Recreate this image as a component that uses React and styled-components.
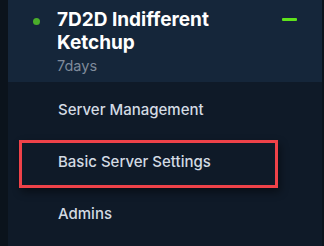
import styled, { createGlobalStyle } from "styled-components";

const GlobalStyle = createGlobalStyle`
    html, body{
        margin: 0;
        padding: 0;
        background-color: #0b131c;
        font-family: Inter, "Liberation Sans", sans-serif;
    }
`

const Layout = styled.div`
    display: flex;
    width: 324px;
    height: 246px;
    overflow: hidden;
    background-color: #0b131c;
`

const Sidebar = styled.aside`
    margin-left: 8px;
    width: 314px;
    display: flex;
    flex-direction: column;
    background-color: #0f1a28;
`

const ServerHeader = styled.div`
    height: 82px;
    box-sizing: border-box;
    padding: 8px 25px 0 25px;
    display: flex;
    align-items: flex-start;
    background-color: #15263a;
`

const StatusDot = styled.span`
    width: 7px;
    height: 7px;
    margin-top: 10px;
    border-radius: 50%;
    background-color: #4aad2a;
    flex-shrink: 0;
`

const ServerInfo = styled.div`
    margin-left: 17px;
    flex: 1;
    h2{
        margin: 0;
        max-width: 200px;
        font-size: 19px;
        line-height: 23px;
        font-weight: 700;
        color: #ffffff;
    }
    span{
        display: block;
        margin-top: 3px;
        font-size: 14.5px;
        line-height: 18px;
        color: #7f8b9b;
    }
`

const Collapse = styled.span`
    width: 15px;
    height: 3px;
    margin-top: 10px;
    border-radius: 1px;
    background-color: #5fe31b;
    flex-shrink: 0;
`

const Nav = styled.nav`
    display: flex;
    flex-direction: column;
    gap: 4px;
    padding-top: 6px;
`

const NavItem = styled.a`
    display: flex;
    align-items: center;
    box-sizing: border-box;
    margin-left: 11px;
    width: 259px;
    height: 48px;
    padding: 0 0 5px 36px;
    font-size: 15px;
    font-weight: 500;
    color: #d3dae3;
    border: 3px solid ${props => props.$marked ? '#ef4249' : 'transparent'};
    box-shadow: ${props => props.$marked ? '2px 4px 8px rgba(0, 0, 0, 0.45)' : 'none'};
`

const items = ['Server Management', 'Basic Server Settings', 'Admins']

const App = () => {
  return (
    <Layout>
      <GlobalStyle />
      <Sidebar>
        <ServerHeader>
          <StatusDot />
          <ServerInfo>
            <h2>7D2D Indifferent Ketchup</h2>
            <span>7days</span>
          </ServerInfo>
          <Collapse />
        </ServerHeader>
        <Nav>
          {items.map(item => (
            <NavItem key={item} $marked={item === 'Basic Server Settings'}>{item}</NavItem>
          ))}
        </Nav>
      </Sidebar>
    </Layout>
  )
}

export default App
